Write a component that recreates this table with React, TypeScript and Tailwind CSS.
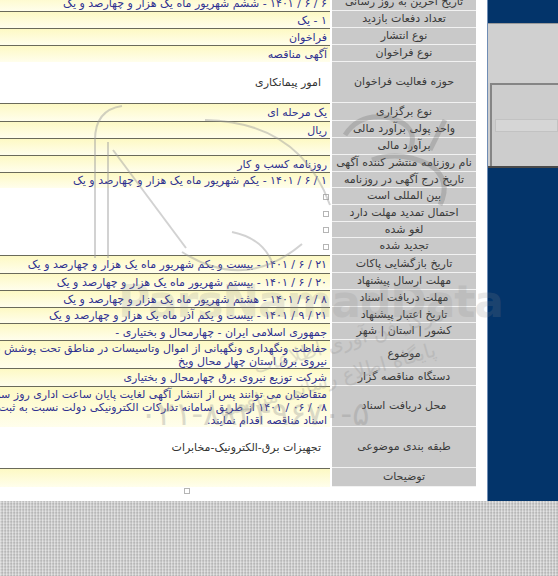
import React from "react";

type Kind = "y" | "w" | "c";
interface Row {
  label: string;
  h: string;
  kind: Kind;
  lines?: string[];
}

const rows: Row[] = [
  { label: "تاریخ آخرین به روز رسانی", h: "h-[17px]", kind: "y", lines: ["۶ / ۶ / ۱۴۰۱ - ششم شهریور ماه یک هزار و چهارصد و یک"] },
  { label: "تعداد دفعات بازدید", h: "h-[17px]", kind: "y", lines: ["۱ - یک"] },
  { label: "نوع انتشار", h: "h-[17px]", kind: "y", lines: ["فراخوان"] },
  { label: "نوع فراخوان", h: "h-[17px]", kind: "y", lines: ["آگهی مناقصه"] },
  { label: "حوزه فعالیت فراخوان", h: "h-[41px]", kind: "w", lines: ["امور پیمانکاری"] },
  { label: "نوع برگزاری", h: "h-[18px]", kind: "y", lines: ["یک مرحله ای"] },
  { label: "واحد پولی برآورد مالی", h: "h-[17px]", kind: "y", lines: ["ریال"] },
  { label: "برآورد مالی", h: "h-[17px]", kind: "y", lines: [""] },
  { label: "نام روزنامه منتشر کننده آگهی", h: "h-[17px]", kind: "y", lines: ["روزنامه کسب و کار"] },
  { label: "تاریخ درج آگهی در روزنامه", h: "h-[16px]", kind: "y", lines: ["۱ / ۶ / ۱۴۰۱ - یکم شهریور ماه یک هزار و چهارصد و یک"] },
  { label: "بین المللی است", h: "h-[17px]", kind: "c" },
  { label: "احتمال تمدید مهلت دارد", h: "h-[17px]", kind: "c" },
  { label: "لغو شده", h: "h-[16px]", kind: "c" },
  { label: "تجدید شده", h: "h-[17px]", kind: "c" },
  { label: "تاریخ بازگشایی پاکات", h: "h-[18px]", kind: "y", lines: ["۲۱ / ۶ / ۱۴۰۱ - بیست و یکم شهریور ماه یک هزار و چهارصد و یک"] },
  { label: "مهلت ارسال پیشنهاد", h: "h-[17px]", kind: "y", lines: ["۲۰ / ۶ / ۱۴۰۱ - بیستم شهریور ماه یک هزار و چهارصد و یک"] },
  { label: "مهلت دریافت اسناد", h: "h-[17px]", kind: "y", lines: ["۸ / ۶ / ۱۴۰۱ - هشتم شهریور ماه یک هزار و چهارصد و یک"] },
  { label: "تاریخ اعتبار پیشنهاد", h: "h-[16px]", kind: "y", lines: ["۲۱ / ۹ / ۱۴۰۱ - بیست و یکم آذر ماه یک هزار و چهارصد و یک"] },
  { label: "کشور | استان | شهر", h: "h-[17px]", kind: "y", lines: ["جمهوری اسلامی ایران - چهارمحال و بختیاری -"] },
  {
    label: "موضوع",
    h: "h-[28px]",
    kind: "y",
    lines: [
      "حفاظت ونگهداری ونگهبانی از اموال وتاسیسات در مناطق تحت پوشش شرکت توزیع",
      "نیروی برق استان چهار محال وبخ",
    ],
  },
  { label: "دستگاه مناقصه گزار", h: "h-[18px]", kind: "y", lines: ["شرکت توزیع نیروی برق چهارمحال و بختیاری"] },
  {
    label: "محل دریافت اسناد",
    h: "h-[41px]",
    kind: "y",
    lines: [
      "متقاضیان می توانند پس از انتشار آگهی لغایت پایان ساعت اداری روز سه شنبه مورخ",
      "۰۸ / ۰۶ / ۱۴۰۱ از طریق سامانه تدارکات الکترونیکی دولت نسبت به ثبت نام و دریافت",
      "اسناد مناقصه اقدام نمایند.",
    ],
  },
  { label: "طبقه بندی موضوعی", h: "h-[41px]", kind: "w", lines: ["تجهیزات برق-الکترونیک-مخابرات"] },
  { label: "توضیحات", h: "h-[19px]", kind: "y", lines: [""] },
];

function Check() {
  return <span className="block w-[6px] h-[6px] border border-[#b5b5b5] bg-white" />;
}

function ValueCell({ row }: { row: Row }) {
  if (row.kind === "c") {
    return (
      <div dir="rtl" className="w-[433px] shrink-0 flex items-center pr-[1px] bg-white">
        <Check />
      </div>
    );
  }
  if (row.kind === "w") {
    return (
      <div dir="rtl" className="w-[433px] shrink-0 flex items-center pr-[9px] bg-white text-[#333] text-[11px] whitespace-nowrap">
        <span className="pt-[1px]">{row.lines?.[0]}</span>
      </div>
    );
  }
  return (
    <div
      dir="rtl"
      className="w-[433px] shrink-0 flex flex-col justify-center pr-[3px] border-t border-[#6a6a5a] bg-[image:linear-gradient(180deg,#fdf9c4,#fffeec)] text-[#2f3190] text-[11px] leading-[13px] whitespace-nowrap overflow-hidden"
    >
      {row.lines?.map((l, i) => (
        <div key={i}>{l}</div>
      ))}
    </div>
  );
}

function Watermark() {
  return (
    <div className="absolute left-0 top-0 w-[558px] h-[500px] pointer-events-none overflow-hidden">
      <svg className="absolute left-0 top-0" width="558" height="500" viewBox="0 0 558 500" fill="none">
        <g stroke="#9c9c9c" strokeOpacity="0.45" strokeWidth="2">
          <path d="M95 258 L95 140 Q95 110 122 106" />
          <path d="M108 258 L108 142" />
          <path d="M113 150 L186 248" />
          <path d="M205 120 Q300 122 330 205" />
          <path d="M182 252 Q245 292 302 244" />
          <path d="M232 232 Q262 238 272 262" />
        </g>
        <g stroke="#707070" strokeOpacity="0.3" strokeWidth="5">
          <path d="M345 135 Q360 112 390 118 Q420 126 410 150" />
          <path d="M372 160 Q400 150 430 165 Q452 180 440 205" />
          <path d="M430 150 L445 120" />
        </g>
      </svg>
      <div className="absolute left-[118px] top-[280px] text-[44px] font-bold text-[#8a8a8a] opacity-[0.18] tracking-tight leading-none">
        ParsNamadData
      </div>
      <div
        dir="rtl"
        className="absolute left-[250px] top-[330px] rotate-[-16deg] text-[20px] text-[#9a9a9a] opacity-[0.3] whitespace-nowrap leading-none"
      >
        مرکز فن آوری اطلاعات
      </div>
      <div
        dir="rtl"
        className="absolute left-[215px] top-[370px] rotate-[-16deg] text-[20px] text-[#9a9a9a] opacity-[0.3] whitespace-nowrap leading-none"
      >
        پایگاه اطلاع رسانی مناقصه
      </div>
      <div dir="ltr" className="absolute left-[140px] top-[398px] text-[32px] text-[#8a8a8a] opacity-[0.3] whitespace-nowrap leading-none">
        ۰۲۱-۸۸۳۴۹۶۷۰-۵
      </div>
    </div>
  );
}

export default function App() {
  return (
    <div className="relative w-[558px] h-[576px] overflow-hidden bg-white font-['DejaVu_Sans',sans-serif]">
      <div className="flex justify-end items-start h-[501px] overflow-hidden">
        <div className="w-[579px] shrink-0 flex flex-col -mt-[6px]">
          {rows.map((r, i) => (
            <div key={i} className={`flex gap-[2px] ${r.h}`}>
              <ValueCell row={r} />
              <div
                dir="rtl"
                className="w-[144px] shrink-0 flex items-center justify-center text-center bg-[#c9c9c9] border-b border-[#f2f2f2] text-[#3a3a3a] text-[11px] leading-[12px] whitespace-nowrap"
              >
                {r.label}
              </div>
            </div>
          ))}
          <div className="h-[13px] flex items-start pt-[1px] justify-center bg-white">
            <Check />
          </div>
        </div>
        <div className="w-[71px] h-[501px] shrink-0 ml-[11px] flex flex-col border-l border-[#6f8db5] bg-[#03346a]">
          <div className="h-[23px] bg-[#03346a]" />
          <div className="h-[60px] bg-[#d0d0d0] border-t border-[#9a9a9a]" />
          <div className="h-[85px] bg-[#cdcdcd] pl-[2px] border-b-2 border-[#4a4a4a]">
            <div className="h-full border-l-2 border-t-2 border-[#858585] pt-[34px] pl-[3px]">
              <div className="h-[13px] bg-[#d6d6d6] border border-[#c2c2c2]" />
            </div>
          </div>
          <div className="flex-1 bg-[#03346a]" />
        </div>
      </div>
      <div className="h-[75px] bg-[#c9c9c9] bg-[image:repeating-linear-gradient(90deg,rgba(255,255,255,0.35)_0px,rgba(255,255,255,0.35)_1px,transparent_1px,transparent_2px,rgba(0,0,0,0.05)_2px,rgba(0,0,0,0.05)_3px),repeating-linear-gradient(0deg,#c0c0c0_0px,#c0c0c0_1px,#d4d4d4_1px,#d4d4d4_2px,#c9c9c9_2px,#c9c9c9_3px)]" />
      <Watermark />
    </div>
  );
}
